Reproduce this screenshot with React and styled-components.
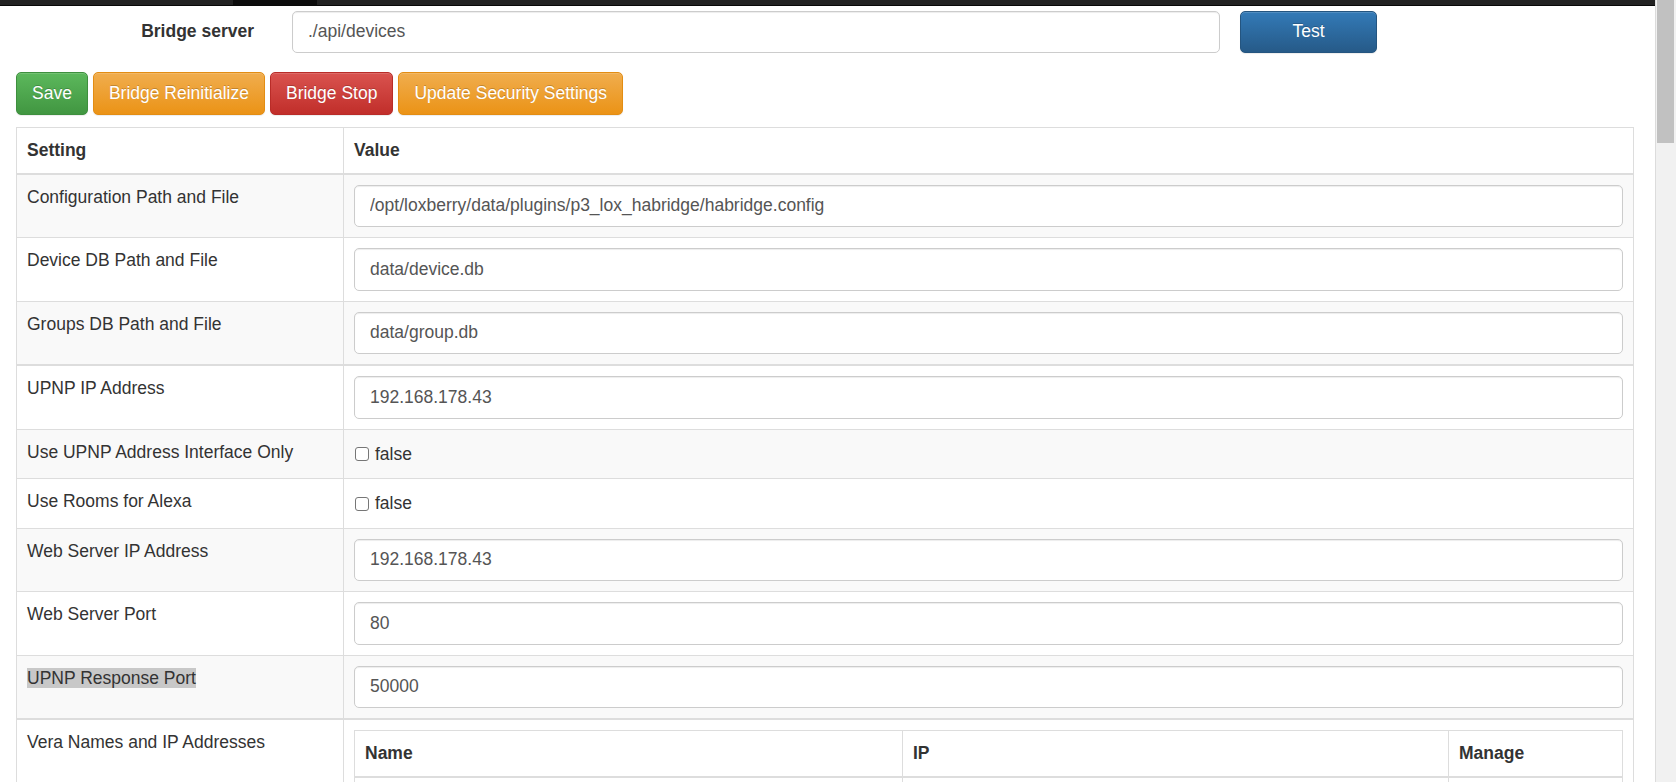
import React from "react";
import styled, { createGlobalStyle, css } from "styled-components";

const GlobalStyle = createGlobalStyle`
  * {
    box-sizing: border-box;
  }
  body {
    margin: 0;
    overflow: hidden;
    font-family: "Liberation Sans", Arial, sans-serif;
    font-size: 17.5px;
    line-height: 25px;
    color: #333;
    background: #fff;
  }
`;

const Screen = styled.div`
  display: flex;
  height: 782px;
  overflow: hidden;
`;

const Main = styled.div`
  flex: 1;
  min-width: 0;
`;

const ScrollTrack = styled.div`
  width: 21px;
  flex-shrink: 0;
  background: #f1f1f1;
  border-left: 1px solid #dcdcdc;
  padding-left: 1px;
`;

const ScrollThumb = styled.div`
  width: 17px;
  height: 143px;
  background: #c1c1c1;
`;

const NavStrip = styled.div`
  display: flex;
  height: 6px;
  background: #222;
  border-bottom: 1px solid #080808;
`;

const NavActive = styled.div`
  margin-left: 233px;
  width: 84px;
  background: #0c0c0c;
`;

const ServerRow = styled.div`
  display: flex;
  align-items: center;
  margin-top: 4.5px;
`;

const ServerLabel = styled.label`
  width: 254px;
  margin-right: 38px;
  text-align: right;
  font-weight: bold;
`;

const TextInput = styled.input`
  display: block;
  width: ${(p) => p.$width || "100%"};
  height: 42.5px;
  padding: 7.5px 15px;
  font-family: inherit;
  font-size: 17.5px;
  line-height: 25px;
  color: #555;
  background: #fff;
  border: 1px solid #ccc;
  border-radius: 5px;
  box-shadow: inset 0 1px 1px rgba(0, 0, 0, 0.075);
  outline: none;
`;

const variants = {
  success: css`
    background-image: linear-gradient(to bottom, #5cb85c 0, #419641 100%);
    border-color: #3e8f3e;
  `,
  warning: css`
    background-image: linear-gradient(to bottom, #f0ad4e 0, #eb9316 100%);
    border-color: #e38d13;
  `,
  danger: css`
    background-image: linear-gradient(to bottom, #d9534f 0, #c12e2a 100%);
    border-color: #b92c28;
  `,
  primary: css`
    background-image: linear-gradient(to bottom, #337ab7 0, #265a88 100%);
    border-color: #245580;
  `,
};

const Button = styled.button`
  height: 42.5px;
  padding: 7.5px 15px;
  font-family: inherit;
  font-size: 17.5px;
  line-height: 25px;
  color: #fff;
  border: 1px solid transparent;
  border-radius: 5px;
  text-shadow: 0 -1px 0 rgba(0, 0, 0, 0.2);
  box-shadow: inset 0 1px 0 rgba(255, 255, 255, 0.15),
    0 1px 1px rgba(0, 0, 0, 0.075);
  white-space: nowrap;
  cursor: pointer;
  ${(p) => variants[p.$variant]}
  ${(p) => p.$width && `width: ${p.$width};`}
`;

const TestButton = styled(Button)`
  margin-left: 20px;
`;

const ActionBar = styled.div`
  display: flex;
  gap: 5px;
  margin: 19px 0 12px 16px;
`;

const SettingsTable = styled.table`
  width: 1618px;
  margin-left: 16px;
  border-collapse: collapse;
  border: 1px solid #ddd;
  table-layout: fixed;

  th,
  td {
    padding: 10px;
    border: 1px solid #ddd;
    vertical-align: top;
    text-align: left;
    line-height: 25px;
  }
  > thead > tr > th {
    vertical-align: bottom;
    border-bottom: 2px solid #ddd;
  }
  > tbody + tbody {
    border-top: 2px solid #ddd;
  }
`;

const Row = styled.tr`
  background: ${(p) => (p.$striped ? "#f9f9f9" : "#fff")};
`;

const CheckLabel = styled.label`
  display: flex;
  align-items: center;
  gap: 6px;
  padding: 2px 0 1.5px;
`;

const CheckBox = styled.input`
  appearance: none;
  width: 14px;
  height: 14px;
  margin: 0 0 0 1px;
  border: 1px solid #767676;
  border-radius: 3px;
  background: #fff;
`;

const Selected = styled.span`
  background: #c8c8c8;
`;

const InnerTable = styled.table`
  width: 100%;
  border-collapse: collapse;
  border: 1px solid #ddd;
  background: #fff;
  table-layout: fixed;

  th,
  td {
    padding: 10px;
    border: 1px solid #ddd;
    text-align: left;
    line-height: 25px;
  }
  th {
    vertical-align: bottom;
    border-bottom: 2px solid #ddd;
  }
`;

const groups = [
  [
    { label: "Configuration Path and File", value: "/opt/loxberry/data/plugins/p3_lox_habridge/habridge.config" },
    { label: "Device DB Path and File", value: "data/device.db" },
    { label: "Groups DB Path and File", value: "data/group.db" },
  ],
  [
    { label: "UPNP IP Address", value: "192.168.178.43" },
    { label: "Use UPNP Address Interface Only", check: "false" },
    { label: "Use Rooms for Alexa", check: "false" },
    { label: "Web Server IP Address", value: "192.168.178.43" },
    { label: "Web Server Port", value: "80" },
    { label: "UPNP Response Port", value: "50000", selected: true },
  ],
];

const stripes = [
  [true, false, true],
  [false, true, false, true, false, true],
];

export default function App() {
  return (
    <>
      <GlobalStyle />
      <Screen>
        <Main>
          <NavStrip>
            <NavActive />
          </NavStrip>
          <ServerRow>
            <ServerLabel>Bridge server</ServerLabel>
            <TextInput $width="928px" defaultValue="./api/devices" />
            <TestButton $variant="primary" $width="137px">
              Test
            </TestButton>
          </ServerRow>
          <ActionBar>
            <Button $variant="success">Save</Button>
            <Button $variant="warning">Bridge Reinitialize</Button>
            <Button $variant="danger">Bridge Stop</Button>
            <Button $variant="warning">Update Security Settings</Button>
          </ActionBar>
          <SettingsTable>
            <colgroup>
              <col style={{ width: "327px" }} />
              <col />
            </colgroup>
            <thead>
              <tr>
                <th>Setting</th>
                <th>Value</th>
              </tr>
            </thead>
            {groups.map((rows, g) => (
              <tbody key={g}>
                {rows.map((r, i) => (
                  <Row key={r.label} $striped={stripes[g][i]}>
                    <td>{r.selected ? <Selected>{r.label}</Selected> : r.label}</td>
                    <td>
                      {r.check ? (
                        <CheckLabel>
                          <CheckBox type="checkbox" />
                          {r.check}
                        </CheckLabel>
                      ) : (
                        <TextInput defaultValue={r.value} />
                      )}
                    </td>
                  </Row>
                ))}
              </tbody>
            ))}
            <tbody>
              <Row>
                <td>Vera Names and IP Addresses</td>
                <td>
                  <InnerTable>
                    <colgroup>
                      <col style={{ width: "548px" }} />
                      <col style={{ width: "546px" }} />
                      <col />
                    </colgroup>
                    <thead>
                      <tr>
                        <th>Name</th>
                        <th>IP</th>
                        <th>Manage</th>
                      </tr>
                    </thead>
                    <tbody>
                      <tr>
                        <td>
                          <TextInput />
                        </td>
                        <td>
                          <TextInput />
                        </td>
                        <td />
                      </tr>
                    </tbody>
                  </InnerTable>
                </td>
              </Row>
            </tbody>
          </SettingsTable>
        </Main>
        <ScrollTrack>
          <ScrollThumb />
        </ScrollTrack>
      </Screen>
    </>
  );
}
